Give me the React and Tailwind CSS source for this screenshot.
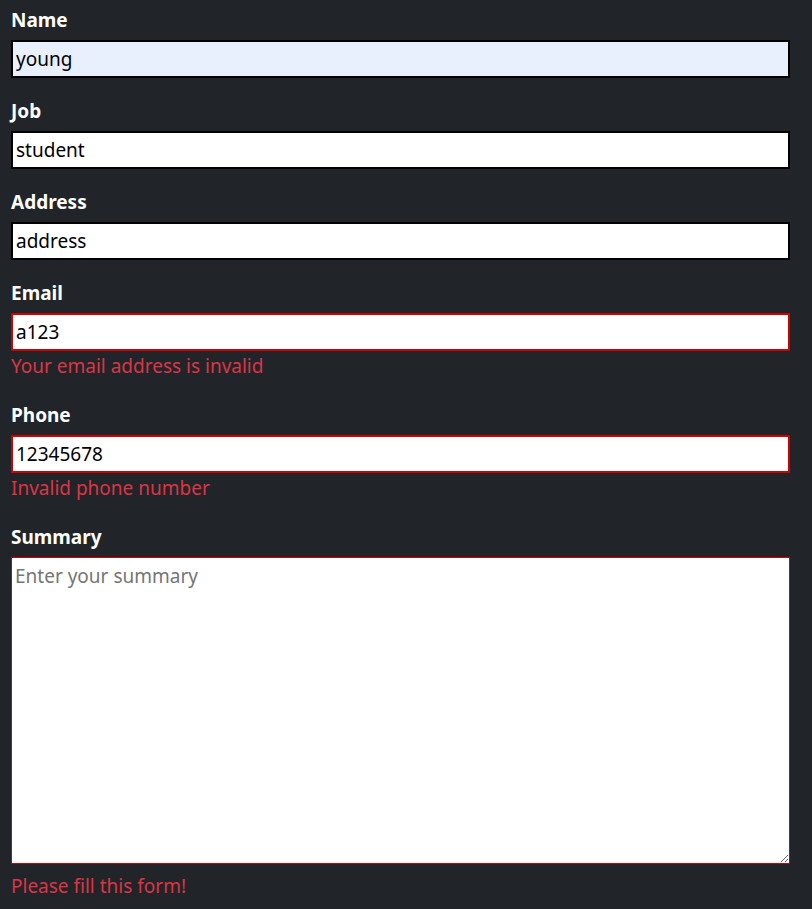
import React from "react";

const font = { fontFamily: '"Noto Sans", "Noto Sans CJK KR", sans-serif' };

function Label({ children }) {
  return (
    <label className="block h-[28px] text-[19px] font-bold leading-[16px] text-white">{children}</label>
  );
}

function Field({ label, value, error, bg = "bg-white", invalid }) {
  return (
    <div className="flex flex-col">
      <Label>{label}</Label>
      <input
        defaultValue={value}
        className={`h-[38px] w-full border-2 px-[3px] text-[19px] text-black outline-none ${bg} ${invalid ? "border-[#d00000]" : "border-black"}`}
      />
      {error && (
        <div className="h-[31px] text-[19px] leading-[30px] text-[#dc3545]">{error}</div>
      )}
    </div>
  );
}

export default function App() {
  return (
    <div className="min-h-[909px] bg-[#212529] px-[11px] pt-3" style={font}>
      <div className="flex w-[779px] flex-col gap-[25px]">
        <Field label="Name" value="young" bg="bg-[#e8f0fe]" />
        <Field label="Job" value="student" />
        <Field label="Address" value="address" />
        <Field label="Email" value="a123" invalid error="Your email address is invalid" />
        <Field label="Phone" value="12345678" invalid error="Invalid phone number" />
        <div className="flex flex-col">
          <Label>Summary</Label>
          <textarea
            placeholder="Enter your summary"
            className="block h-[307px] w-full border border-[#d00000] bg-white px-[3px] pt-[4px] pb-[2px] text-[19px] text-black outline-none placeholder:text-[#757575]"
          />
          <div className="pt-[7px] text-[19px] leading-[30px] text-[#dc3545]">Please fill this form!</div>
        </div>
      </div>
    </div>
  );
}
